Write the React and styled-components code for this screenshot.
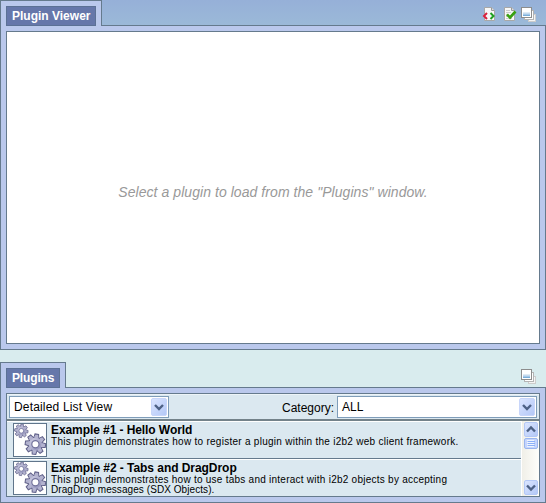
import React from "react";
import styled, { createGlobalStyle } from "styled-components";

const Global = createGlobalStyle`
  * { box-sizing: border-box; }
  html, body { margin: 0; padding: 0; overflow: hidden; }
  body { font-family: "Liberation Sans", Arial, sans-serif; color: #000; }
`;

const Page = styled.main`
  width: 546px;
  height: 503px;
  display: flex;
  flex-direction: column;
  gap: 12px;
  background: linear-gradient(#96b0d8 0, #9bb9d8 25px, #d9ecee 340px, #d9ecee 100%);
`;

const Window = styled.section`
  display: flex;
  flex-direction: column;
  height: ${(p) => p.$height}px;
`;

const TabBar = styled.header`
  display: flex;
  justify-content: space-between;
  height: 26px;
  flex: none;
  margin-bottom: -1px;
  z-index: 1;
`;

const Tab = styled.div`
  width: ${(p) => p.$width}px;
  height: 26px;
  padding: 5px 5px 0;
  background: #bac8ec;
  border: 1px solid #657a8d;
  border-bottom: 0;
`;

const TabLabel = styled.div`
  height: 20px;
  padding-left: 5px;
  background: #6677aa;
  border: 1px solid #5c7195;
  color: #fff;
  font-size: 12px;
  font-weight: bold;
  line-height: 18px;
  letter-spacing: ${(p) => p.$spacing || 0}px;
  white-space: nowrap;
`;

const Tools = styled.div`
  display: flex;
  gap: 4px;
  padding: 7px 9px 0 0;
`;

const Frame = styled.div`
  flex: 1;
  min-height: 0;
  padding: 5px;
  background: #bac8ec;
  border: 1px solid #657a8d;
`;

const Viewer = styled.div`
  height: 100%;
  display: flex;
  align-items: center;
  justify-content: center;
  padding-top: 9px;
  background: #fff;
  border: 1px solid #657a8d;
  color: #999;
  font-size: 14px;
  font-style: italic;
  letter-spacing: 0.06px;
`;

const Panel = styled.div`
  height: 100%;
  display: flex;
  flex-direction: column;
  border: 1px solid #657a8d;
  background: #dbe8f0;
`;

const Filters = styled.div`
  height: 27px;
  flex: none;
  display: flex;
  align-items: flex-start;
  padding: 1px 2px 0;
  border-top: 1px solid #edf4f8;
  border-bottom: 2px solid #73828a;
`;

const Select = styled.div`
  width: ${(p) => p.$width}px;
  height: 22px;
  display: flex;
  justify-content: space-between;
  padding: 1px 1px 1px 4px;
  background: #fff;
  border: 1px solid #7f9db9;
  font-size: 12px;
  line-height: 19px;
  letter-spacing: ${(p) => p.$spacing || 0}px;
`;

const Category = styled.label`
  margin: 3px 3px 0 auto;
  font-size: 12px;
  line-height: 19px;
`;

const ListArea = styled.div`
  flex: 1;
  min-height: 0;
  display: flex;
`;

const List = styled.div`
  flex: 1;
  overflow: hidden;
`;

const Row = styled.article`
  height: 38px;
  display: flex;
  gap: 4px;
  padding: 1px 0 0 6px;
  border-top: 1px solid #fff;
  border-bottom: 1px solid #657a8d;
`;

const Thumb = styled.div`
  width: 34px;
  height: 34px;
  flex: none;
  border: 1px solid #60758b;
  background: #fff;
`;

const Title = styled.h2`
  margin: 0;
  font-size: 12px;
  line-height: 14px;
  letter-spacing: ${(p) => p.$spacing || 0}px;
`;

const Description = styled.p`
  margin: 0;
  font-size: 10px;
  line-height: 10px;
  white-space: nowrap;
`;

const Line = styled.span`
  display: block;
  letter-spacing: ${(p) => p.$spacing || 0}px;
`;

const ScrollBar = styled.div`
  width: 18px;
  display: flex;
  flex-direction: column;
  padding-left: 1px;
  background: linear-gradient(90deg, #f0efe8, #fefefb);
  border-left: 1px solid #fff;
`;

const Spacer = styled.div`
  flex: 1;
`;

const ArrowButton = ({ w = 16, h = 18 }) => (
  <svg width={w} height={h} viewBox={`0 0 ${w} ${h}`}>
    <defs>
      <linearGradient id="btn" x2="1" y2="1">
        <stop stopColor="#dce6ff" />
        <stop offset="1" stopColor="#b2c7f7" />
      </linearGradient>
    </defs>
    <rect x=".5" y=".5" width={w - 1} height={h - 1} rx="1.5" fill="url(#btn)" stroke="#c8d6fa" />
    <path d={`M${w / 2 - 4} ${h / 2 - 2}l4 4 4-4`} fill="none" stroke="#4d6185" strokeWidth="2.4" />
  </svg>
);

const ScrollButton = ({ up }) => (
  <svg width="16" height="17" viewBox="0 0 16 17">
    <rect x="1.5" y="1.5" width="13" height="14" rx="1.5" fill="url(#btn)" stroke="#b4c8f6" />
    <path d={up ? "M4 10.5l4-4 4 4" : "M4 6.5l4 4 4-4"} fill="none" stroke="#4d6185" strokeWidth="2.4" />
  </svg>
);

const ScrollThumb = () => (
  <svg width="16" height="11" viewBox="0 0 16 11">
    <rect x="1.5" y=".5" width="13" height="10" rx="1.5" fill="#c5d5fd" stroke="#9ab5ee" />
    <path d="M4 2.5h7M4 4.5h7M4 6.5h7M4 8.5h7" stroke="#eef4fe" />
    <path d="M5 3.5h7M5 5.5h7M5 7.5h7" stroke="#8cb0f8" />
  </svg>
);

const PageShape = () => (
  <>
    <path d="M2.5.5h7l3 3v10h-10z" fill="#f7f7f7" stroke="#a8a8a8" />
    <path d="M9.5.5v3h3" fill="#ddd" stroke="#999" />
  </>
);

const CodeIcon = () => (
  <svg width="16" height="15" viewBox="0 0 16 15">
    <PageShape />
    <path d="M5 6L2 9l3 3" fill="none" stroke="#d8203c" strokeWidth="2" />
    <path d="M8.5 6l3 3-3 3" fill="none" stroke="#20a020" strokeWidth="2" />
  </svg>
);

const CheckIcon = () => (
  <svg width="15" height="15" viewBox="0 0 15 15">
    <PageShape />
    <path d="M4 3.5h4M4 5.5h5M4 7.5h2M4 9.5h1M4 11.5h6" stroke="#ccc" />
    <path d="M5 7.5l3 3 5.5-6" fill="none" stroke="#38a010" strokeWidth="2.6" />
  </svg>
);

const StackIcon = () => (
  <svg width="16" height="16" viewBox="0 0 16 16">
    <rect x="7.5" y="7.5" width="7" height="7" fill="#f4f4f4" stroke="#ccc" />
    <rect x="3.5" y="3.5" width="9" height="9" fill="#fff" stroke="#b4b4b4" />
    <rect x=".5" y=".5" width="10" height="10" fill="#fff" stroke="#8d8d8d" />
    <path d="M2 5.5h7" stroke="#e0ebf5" />
    <path d="M2 6.5h7" stroke="#c5daed" />
    <path d="M2 7.5h7" stroke="#a5c8e8" />
    <path d="M2 8.5h7" stroke="#79add8" />
  </svg>
);

const Gear = ({ cx, cy, r }) => (
  <g transform={`translate(${cx} ${cy}) scale(${r / 10})`}>
    {[0, 45, 90, 135, 180, 225, 270, 315].map((a) => (
      <path key={a} transform={`rotate(${a + 8})`} d="M-2.3-6L-1.7-9.6h3.4l.6 3.6z" fill="#b4b4d0" stroke="#62628a" strokeWidth="1" />
    ))}
    <circle r="6.7" fill="url(#steel)" stroke="#62628a" strokeWidth=".9" />
    {[0, 45, 90, 135, 180, 225, 270, 315].map((a) => (
      <path key={a} transform={`rotate(${a + 8})`} d="M-1.8-5.5v-2h3.6v2z" fill="#b4b4d0" />
    ))}
    <circle r="3.4" fill="#fff" stroke="#70709a" strokeWidth="1.1" />
  </g>
);

const Gears = () => (
  <svg width="32" height="32" viewBox="0 0 32 32" display="block">
    <defs>
      <linearGradient id="steel" x2="1" y2="1">
        <stop stopColor="#d6d6e8" />
        <stop offset="1" stopColor="#8888b4" />
      </linearGradient>
    </defs>
    <Gear cx={7.3} cy={6.8} r={7} />
    <Gear cx={21.4} cy={20.2} r={10.6} />
  </svg>
);

const plugins = [
  {
    title: "Example #1 - Hello World",
    spacing: -0.08,
    lines: [
      { text: "This plugin demonstrates how to register a plugin within the i2b2 web client framework.", spacing: 0.27 },
    ],
  },
  {
    title: "Example #2 - Tabs and DragDrop",
    spacing: -0.05,
    lines: [
      { text: "This plugin demonstrates how to use tabs and interact with i2b2 objects by accepting", spacing: 0.25 },
      { text: "DragDrop messages (SDX Objects).", spacing: 0.07 },
    ],
  },
];

export default function App() {
  return (
    <>
      <Global />
      <Page>
        <Window $height={350}>
          <TabBar>
            <Tab $width={102}><TabLabel>Plugin Viewer</TabLabel></Tab>
            <Tools><CodeIcon /><CheckIcon /><StackIcon /></Tools>
          </TabBar>
          <Frame>
            <Viewer>Select a plugin to load from the "Plugins" window.</Viewer>
          </Frame>
        </Window>
        <Window $height={141}>
          <TabBar>
            <Tab $width={66}><TabLabel $spacing={-0.15}>Plugins</TabLabel></Tab>
            <Tools><StackIcon /></Tools>
          </TabBar>
          <Frame>
            <Panel>
              <Filters>
                <Select $width={160} $spacing={0.17}>Detailed List View<ArrowButton /></Select>
                <Category>Category:</Category>
                <Select $width={200}>ALL<ArrowButton /></Select>
              </Filters>
              <ListArea>
                <List>
                  {plugins.map((p) => (
                    <Row key={p.title}>
                      <Thumb><Gears /></Thumb>
                      <div>
                        <Title $spacing={p.spacing}>{p.title}</Title>
                        <Description>
                          {p.lines.map((l) => <Line key={l.text} $spacing={l.spacing}>{l.text}</Line>)}
                        </Description>
                      </div>
                    </Row>
                  ))}
                </List>
                <ScrollBar>
                  <ScrollButton up />
                  <ScrollThumb />
                  <Spacer />
                  <ScrollButton />
                </ScrollBar>
              </ListArea>
            </Panel>
          </Frame>
        </Window>
      </Page>
    </>
  );
}
